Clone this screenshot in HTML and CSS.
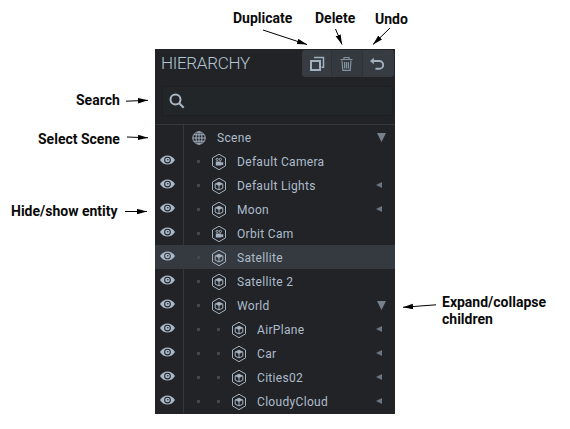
FILE: index.html
```html
<!DOCTYPE html>
<html lang="en">
<head>
<meta charset="utf-8">
<title>Hierarchy panel</title>
<link rel="stylesheet" href="styles.css">
</head>
<body>
<svg class="defs" aria-hidden="true">
  <symbol id="eye" viewBox="0 0 16 10"><path fill-rule="evenodd" d="M0 5C2 1.800 4.700 .2 8 .2S14 1.800 16 5C14 8.200 11.300 9.800 8 9.800S2 8.200 0 5ZM8 1.400a3.600 3.600 0 1 0 0 7.200a3.600 3.600 0 1 0 0-7.200Z"/><circle cx="8" cy="5" r="2.500"/><circle cx="8.300" cy="4.700" r=".8" fill="#20242a"/></symbol>
  <symbol id="entity" viewBox="0 0 16 18"><path class="line" d="M8 1.200 14.500 4.900V12.900L8 16.700 1.500 12.900V4.900Z"/><path d="M8 4.800 12.300 6.700 8 8.900 3.700 6.700Z"/><path class="line" d="M4.200 6.900V11.200L8 12.900L11.800 11.200V6.900"/><path class="line" d="M8 8.500V13"/></symbol>
  <symbol id="camera" viewBox="0 0 16 18"><path class="line" d="M8 1.200 14.500 4.900V12.900L8 16.700 1.500 12.900V4.900Z"/><circle class="line" cx="6.200" cy="6.400" r="1.100"/><circle class="line" cx="9.400" cy="6.400" r="1.100"/><path d="M4.800 8.600H10.300V9.800L12.200 8.900V12.300L10.300 11.500V12.500H4.800Z"/></symbol>
  <symbol id="globe" viewBox="0 0 14 14"><g class="line"><circle cx="7" cy="7" r="6.200"/><ellipse cx="7" cy="7" rx="3" ry="6.200"/><path d="M7 .8V13.200M.8 7H13.200M1.800 3.800H12.200M1.800 10.200H12.200"/></g></symbol>
</svg>
<main class="figure">
  <section class="panel">
    <header class="header">
      <h1 class="title">HIERARCHY</h1>
      <div class="toolbar">
        <button class="tool" aria-label="Duplicate"><svg width="16" height="16" viewBox="0 0 16 16"><path d="M2 5H11V14H2Z" stroke-width="2"/><path d="M5 1.500H14.500V11.200H12.500" stroke-width="1.500"/></svg></button>
        <button class="tool tool-delete" aria-label="Delete"><svg width="14" height="16" viewBox="0 0 14 16"><path d="M.5 3.500H12.500M4 3V1.500H9V3M2 4.500 2.800 14.300H10.200L11 4.500M4.600 6V12.500M6.500 6V12.500M8.400 6V12.500" stroke-width="1.200"/></svg></button>
        <button class="tool tool-undo" aria-label="Undo"><svg width="16" height="16" viewBox="0 0 16 16"><path d="M3 5H10.300A3.900 3.900 0 0 1 10.300 12.800H6.500" stroke-width="1.900"/><path class="solid" d="M1 5 4.800 1.800V8.200Z"/></svg></button>
      </div>
    </header>
    <div class="search"><svg width="16" height="16" viewBox="0 0 16 16"><circle cx="6.500" cy="6.500" r="5"/><path d="M10 10 14.700 14.700"/></svg></div>
    <div class="tree">
      <div class="row"><span class="vis"></span><div class="item root"><svg class="globe"><use href="#globe"/></svg><span class="name">Scene</span><i class="open"></i></div></div>
      <div class="row"><span class="vis"><svg class="eye"><use href="#eye"/></svg></span><div class="item"><i class="dot"></i><svg class="hex"><use href="#camera"/></svg><span class="name">Default Camera</span></div></div>
      <div class="row"><span class="vis"><svg class="eye"><use href="#eye"/></svg></span><div class="item"><i class="dot"></i><svg class="hex"><use href="#entity"/></svg><span class="name">Default Lights</span><i class="closed"></i></div></div>
      <div class="row"><span class="vis"><svg class="eye"><use href="#eye"/></svg></span><div class="item"><i class="dot"></i><svg class="hex"><use href="#entity"/></svg><span class="name">Moon</span><i class="closed"></i></div></div>
      <div class="row"><span class="vis"><svg class="eye"><use href="#eye"/></svg></span><div class="item"><i class="dot"></i><svg class="hex"><use href="#camera"/></svg><span class="name">Orbit Cam</span></div></div>
      <div class="row selected"><span class="vis"><svg class="eye"><use href="#eye"/></svg></span><div class="item"><i class="dot"></i><svg class="hex"><use href="#entity"/></svg><span class="name">Satellite</span></div></div>
      <div class="row"><span class="vis"><svg class="eye"><use href="#eye"/></svg></span><div class="item"><i class="dot"></i><svg class="hex"><use href="#entity"/></svg><span class="name">Satellite 2</span></div></div>
      <div class="row"><span class="vis"><svg class="eye"><use href="#eye"/></svg></span><div class="item"><i class="dot"></i><svg class="hex"><use href="#entity"/></svg><span class="name">World</span><i class="open"></i></div></div>
      <div class="row"><span class="vis"><svg class="eye"><use href="#eye"/></svg></span><div class="item"><i class="dot"></i><i class="dot"></i><svg class="hex"><use href="#entity"/></svg><span class="name">AirPlane</span><i class="closed"></i></div></div>
      <div class="row"><span class="vis"><svg class="eye"><use href="#eye"/></svg></span><div class="item"><i class="dot"></i><i class="dot"></i><svg class="hex"><use href="#entity"/></svg><span class="name">Car</span><i class="closed"></i></div></div>
      <div class="row"><span class="vis"><svg class="eye"><use href="#eye"/></svg></span><div class="item"><i class="dot"></i><i class="dot"></i><svg class="hex"><use href="#entity"/></svg><span class="name">Cities02</span><i class="closed"></i></div></div>
      <div class="row"><span class="vis"><svg class="eye"><use href="#eye"/></svg></span><div class="item"><i class="dot"></i><i class="dot"></i><svg class="hex"><use href="#entity"/></svg><span class="name">CloudyCloud</span><i class="closed"></i></div></div>
    </div>
  </section>
  <svg class="arrows" width="570" height="429" viewBox="0 0 570 429">
    <defs><marker id="head" markerUnits="userSpaceOnUse" markerWidth="11" markerHeight="6" refX="10" refY="2.700" orient="auto"><path d="M0 0 10 2.700 0 5.400Z"/></marker></defs>
    <g stroke="#000" stroke-width="1">
      <path marker-end="url(#head)" d="M263 30 307 44.500"/>
      <path marker-end="url(#head)" d="M335.500 29 342 44.500"/>
      <path marker-end="url(#head)" d="M390 28 373 44.500"/>
      <path marker-end="url(#head)" d="M126 101.200 148 100.300"/>
      <path marker-end="url(#head)" d="M127 137 148 137.800"/>
      <path marker-end="url(#head)" d="M125 211.500H147"/>
      <path marker-end="url(#head)" d="M436 304.800 403 307.300"/>
    </g>
  </svg>
  <span class="callout c-duplicate">Duplicate</span>
  <span class="callout c-delete">Delete</span>
  <span class="callout c-undo">Undo</span>
  <span class="callout c-search">Search</span>
  <span class="callout c-scene">Select Scene</span>
  <span class="callout c-entity">Hide/show entity</span>
  <span class="callout c-expand">Expand/collapse<br>children</span>
</main>
</body>
</html>
```
FILE: styles.css
```css
* { box-sizing: border-box; }
body { margin: 0; background: #fff; font-family: Roboto, "Liberation Sans", sans-serif; }
.defs { position: absolute; width: 0; height: 0; }
.figure { position: relative; height: 429px; padding: 49px 0 0 155px; overflow: hidden; }
.panel { width: 240px; height: 365px; background: #212327; color: #aebccb; }
.header { display: flex; justify-content: space-between; height: 37px; padding: 1px 1px 0 6px; }
.title { margin: 0; font-size: 17px; line-height: 27px; font-weight: 300; letter-spacing: -0.3px; color: #b3c4d3; }
.toolbar { display: flex; width: 92px; height: 27px; border-radius: 3px; overflow: hidden; background: #363c41; }
.tool { display: flex; flex: 1; align-items: center; justify-content: center; padding: 0; border: 0; background: none; }
.tool + .tool { border-left: 1px solid #2c3237; }
.tool svg { fill: none; stroke: #a2b1c0; }
.tool .solid { fill: #a2b1c0; stroke: none; }
.tool-delete { background: #33393e; }
.tool-delete svg { stroke: #8292a0; }
.tool-undo { padding-right: 2px; }
.search { display: flex; align-items: center; height: 30px; margin: 0 2px 8px 7px; padding-left: 6px; border: 1px solid #1d1f22; background: #222629; border-radius: 2px; }
.search svg { fill: none; stroke: #a9b8c7; stroke-width: 2; }
.tree { border-top: 1px solid #34373b; }
.row { display: flex; height: 24px; }
.row.selected { background: #343a3f; }
.vis { display: flex; width: 29px; padding: 6px 0 0 5px; border-right: 1px solid #34393e; }
.eye { width: 15px; height: 10px; fill: #a9b8c7; }
.item { display: flex; flex: 1; align-items: center; padding: 0 9px 0 13px; }
.root { padding-left: 8px; }
.globe { width: 14px; height: 14px; margin: 1px 11px 0 0; }
.hex { width: 16px; height: 18px; margin: 1px 10px 0 0; fill: #a4b1bf; }
.line { fill: none; stroke: #a4b1bf; stroke-width: 1; }
.dot { width: 3px; height: 3px; margin: 1px 17px 0 0; background: #41484f; }
.item > .dot:has(+ .hex) { margin-right: 11px; }
.name { flex: 1; padding-top: 2px; font-size: 12px; line-height: 24px; letter-spacing: 0.32px; white-space: nowrap; }
.open { width: 9px; height: 9px; margin-top: 1px; background: #75818d; clip-path: polygon(0 0, 100% 0, 50% 100%); }
.closed { width: 6px; height: 6px; margin-right: 4px; background: #6b7683; clip-path: polygon(0 50%, 100% 0, 100% 100%); }
.arrows { position: absolute; left: 0; top: 0; }
.callout { position: absolute; font-size: 14px; line-height: 17px; font-weight: 700; color: #0a0a0a; white-space: nowrap; }
.c-duplicate { left: 233px; top: 10px; }
.c-delete { left: 315px; top: 10px; }
.c-undo { left: 375px; top: 11px; }
.c-search { left: 76px; top: 92px; }
.c-scene { left: 38px; top: 131px; }
.c-entity { left: 11px; top: 203px; }
.c-expand { left: 442px; top: 294px; }
```
